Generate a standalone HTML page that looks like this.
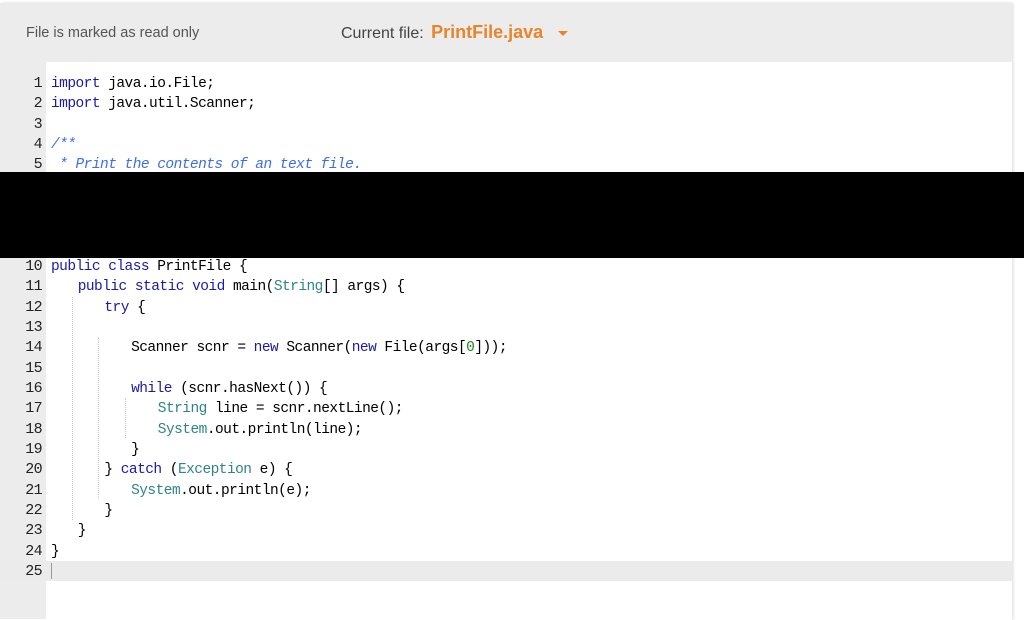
<!DOCTYPE html>
<html><head><style>
body{margin:0;width:1024px;height:620px;background:#fff;overflow:hidden;position:relative;font-family:"Liberation Sans",sans-serif}
.panel{position:absolute;left:0;top:3px;width:1012px;height:617px;background:#fff;box-shadow:1px 0 3px rgba(0,0,0,.15)}
.hdr{position:absolute;left:0;top:0;width:1012px;height:59px;background:#ececec}
.ro{position:absolute;left:26px;top:25px;font-size:14.5px;color:#555}
.cf{position:absolute;left:341px;top:22px;font-size:16px;color:#444}
.cf b{color:#e8842c;font-weight:bold;font-size:18px;margin-left:3px}
.caret{position:absolute;left:558px;top:31px;width:0;height:0;border-left:5px solid transparent;border-right:5px solid transparent;border-top:5px solid #e8842c}
.gut{position:absolute;left:0;top:59px;width:46px;height:560px;background:#ececec}
.ln{position:absolute;left:0;width:42px;text-align:right;font-family:"Liberation Mono",monospace;font-size:15px;letter-spacing:-0.6px;color:#222;line-height:20px}
.code{position:absolute;font-family:"Liberation Mono",monospace;font-size:14.5px;letter-spacing:-0.53px;color:#000;line-height:20px;white-space:pre}
.k{color:#1a1aa6}.c{color:#3d6ee8;font-style:italic}.t{color:#2f8585}.n{color:#1a8a1a}
.act{position:absolute;left:0;top:561px;width:1012px;height:20px;background:#ebebeb}
.black{position:absolute;left:0;top:172px;width:1024px;height:86px;background:#000}
.g{position:absolute;border-left:1px dotted #ccc;width:0}
</style></head><body>
<div class="panel"><div class="hdr"></div></div>
<div class="ro">File is marked as read only</div>
<div class="cf">Current file: <b>PrintFile.java</b></div>
<div class="caret"></div>
<div class="gut"></div>
<div class="act"></div>
<div style="position:absolute;left:51px;top:563px;width:1px;height:16px;background:#999"></div>
<div class="g" style="left:72px;top:297px;height:223px"></div>
<div class="g" style="left:98px;top:337px;height:162px"></div>
<div class="g" style="left:125px;top:398px;height:40px"></div>
<div id="c"></div>
<div class="black"></div>
<script>
var L=[
[1,0,'<span class="k">import</span> java.io.File;'],
[2,0,'<span class="k">import</span> java.util.Scanner;'],
[3,0,''],
[4,0,'<span class="c">/**</span>'],
[5,0,'<span class="c"> * Print the contents of an text file.</span>'],
[6,0,''],[7,0,''],[8,0,''],[9,0,''],
[10,0,'<span class="k">public class</span> PrintFile {'],
[11,1,'<span class="k">public static void</span> main(<span class="t">String</span>[] args) {'],
[12,2,'<span class="k">try</span> {'],
[13,0,''],
[14,3,'Scanner scnr = <span class="k">new</span> Scanner(<span class="k">new</span> File(args[<span class="n">0</span>]));'],
[15,0,''],
[16,3,'<span class="k">while</span> (scnr.hasNext()) {'],
[17,4,'<span class="t">String</span> line = scnr.nextLine();'],
[18,4,'<span class="t">System</span>.out.println(line);'],
[19,3,'}'],
[20,2,'} <span class="k">catch</span> (<span class="t">Exception</span> e) {'],
[21,3,'<span class="t">System</span>.out.println(e);'],
[22,2,'}'],
[23,1,'}'],
[24,0,'}'],
[25,0,'']];
var h='';
L.forEach(function(l){var y=74+(l[0]-1)*20.33;
h+='<div class="ln" style="top:'+y+'px">'+l[0]+'</div>';
h+='<div class="code" style="top:'+y+'px;left:'+(51+l[1]*26.7)+'px">'+l[2]+'</div>';});
document.getElementById('c').innerHTML=h;
</script>
</body></html>
